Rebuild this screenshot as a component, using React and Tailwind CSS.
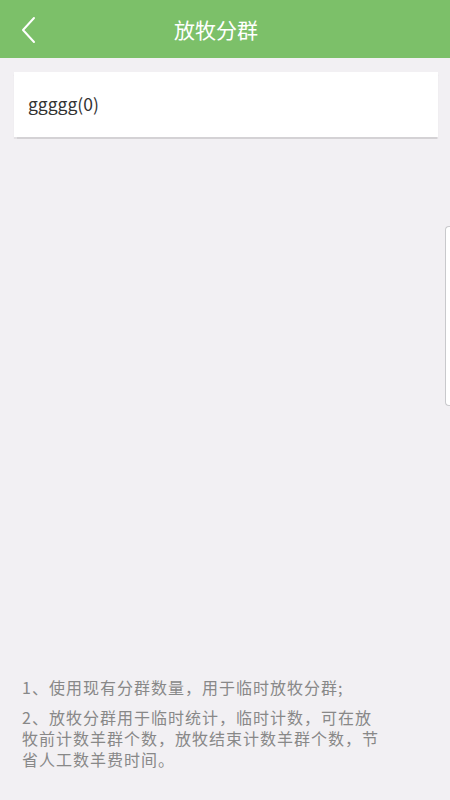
export default function App() {
  return (
    <div
      className="relative flex h-[800px] w-[450px] flex-col overflow-hidden bg-[#f2f0f3]"
      style={{ fontFamily: '"Noto Sans CJK SC", "Noto Sans", sans-serif' }}
    >
      <div className="relative flex h-[58px] shrink-0 items-center justify-center bg-[#7cc069] pr-[18px]">
        <svg
          className="absolute left-[20px] top-[16px]"
          width="18"
          height="28"
          viewBox="0 0 18 28"
          fill="none"
        >
          <polyline
            points="14,2 3,14 14,26"
            stroke="#ffffff"
            strokeWidth="2"
            strokeLinecap="round"
            strokeLinejoin="round"
          />
        </svg>
        <span className="text-[21px] leading-none text-white">放牧分群</span>
      </div>

      <div className="ml-[14px] mr-[12px] mt-[14px] flex h-[65px] items-center bg-white pl-[14px] shadow-[0_1.5px_1px_rgba(0,0,0,0.12)]">
        <span className="text-[17.5px] text-[#333333]">ggggg(0)</span>
      </div>

      <div className="flex-1" />

      <div className="flex flex-col gap-[9px] px-[22px] pb-[30px] text-[16px] leading-[21px] tracking-[1px] text-[#888888]">
        <p>1、使用现有分群数量，用于临时放牧分群;</p>
        <p>
          2、放牧分群用于临时统计，临时计数，可在放
          <br />
          牧前计数羊群个数，放牧结束计数羊群个数，节
          <br />
          省人工数羊费时间。
        </p>
      </div>

      <div className="absolute right-0 top-[226px] h-[180px] w-[5px] rounded-l-[4px] border border-r-0 border-[#c9c9cc] bg-white" />
    </div>
  );
}
